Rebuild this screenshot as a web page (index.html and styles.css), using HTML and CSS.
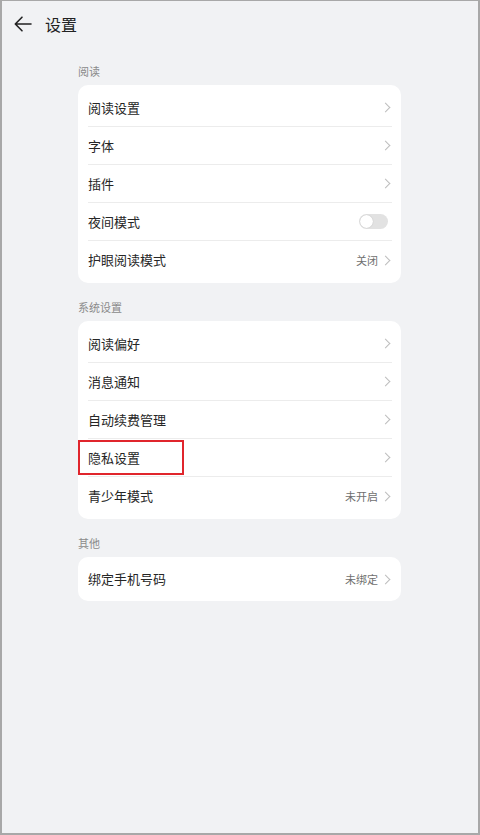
FILE: index.html
```html
<!DOCTYPE html>
<html lang="zh-CN">
<head>
<meta charset="utf-8">
<title>设置</title>
<link rel="stylesheet" href="styles.css">
</head>
<body>
<div class="screen">
  <header class="topbar">
    <svg class="back" width="18" height="16" viewBox="0 0 18 16" aria-hidden="true">
      <path d="M17 8H1.5M8 1.2L1.3 8l6.7 6.8" fill="none" stroke="#222" stroke-width="1.6" stroke-linecap="round" stroke-linejoin="round"/>
    </svg>
    <h1 class="title">设置</h1>
  </header>

  <main class="content">
    <div class="section-label first">阅读</div>
    <section class="card">
      <div class="row"><span class="label">阅读设置</span><span class="right"><i class="chev"></i></span></div>
      <div class="row"><span class="label">字体</span><span class="right"><i class="chev"></i></span></div>
      <div class="row"><span class="label">插件</span><span class="right"><i class="chev"></i></span></div>
      <div class="row"><span class="label">夜间模式</span><span class="right"><span class="toggle"><span class="knob"></span></span></span></div>
      <div class="row"><span class="label">护眼阅读模式</span><span class="right"><span class="value">关闭</span><i class="chev"></i></span></div>
    </section>

    <div class="section-label">系统设置</div>
    <section class="card">
      <div class="row"><span class="label">阅读偏好</span><span class="right"><i class="chev"></i></span></div>
      <div class="row"><span class="label">消息通知</span><span class="right"><i class="chev"></i></span></div>
      <div class="row"><span class="label">自动续费管理</span><span class="right"><i class="chev"></i></span></div>
      <div class="row highlighted"><span class="label">隐私设置</span><span class="right"><i class="chev"></i></span><span class="mark"></span></div>
      <div class="row"><span class="label">青少年模式</span><span class="right"><span class="value">未开启</span><i class="chev"></i></span></div>
    </section>

    <div class="section-label">其他</div>
    <section class="card single">
      <div class="row"><span class="label">绑定手机号码</span><span class="right"><span class="value">未绑定</span><i class="chev"></i></span></div>
    </section>
  </main>
</div>
</body>
</html>
```

FILE: styles.css
```css
* { box-sizing: border-box; margin: 0; padding: 0; }

html, body {
  width: 480px;
  height: 835px;
  background: #f1f2f4;
  font-family: "Noto Sans CJK SC", "Noto Sans", sans-serif;
  color: #222;
}

.screen {
  width: 480px;
  height: 835px;
  border-style: solid;
  border-color: #a8a8a8;
  border-width: 1px 2px 2px 2px;
  background: #f1f2f4;
  overflow: hidden;
}

.topbar {
  height: 45px;
  display: flex;
  align-items: center;
  padding-left: 12px;
}

.back {
  display: block;
  margin-top: 1px;
}

.title {
  font-size: 16px;
  font-weight: 400;
  line-height: 22px;
  margin-left: 13px;
  color: #222;
}

.content {
  margin-left: 76px;
  width: 323px;
}

.section-label {
  font-size: 11px;
  line-height: 16px;
  height: 16px;
  color: #8a8a8a;
  margin-top: 16px;
  margin-bottom: 6px;
}

.section-label.first {
  margin-top: 17px;
}

.card {
  background: #fff;
  border-radius: 10px;
  padding: 4px 0;
}

.card.single {
  padding: 3px 0;
}

.row {
  position: relative;
  height: 38px;
  margin: 0 9px 0 10px;
  display: flex;
  align-items: center;
  justify-content: space-between;
  border-bottom: 1px solid #ececec;
}

.row:last-child {
  border-bottom: none;
}

.label {
  font-size: 13px;
  color: #262626;
  line-height: 18px;
}

.right {
  display: flex;
  align-items: center;
}

.value {
  font-size: 11px;
  color: #6f6f6f;
  margin-right: 4px;
}

.chev {
  display: block;
  width: 7px;
  height: 7px;
  border-top: 1px solid #bdbdbd;
  border-right: 1px solid #bdbdbd;
  transform: rotate(45deg);
  margin-right: 3px;
}

.toggle {
  display: block;
  position: relative;
  width: 29px;
  height: 15px;
  border-radius: 8px;
  background: #e2e2e2;
  margin-right: 4px;
}

.knob {
  position: absolute;
  left: 1px;
  top: 1px;
  width: 13px;
  height: 13px;
  border-radius: 50%;
  background: #fff;
  box-shadow: 0 0 1px rgba(0,0,0,0.25);
}

.mark {
  position: absolute;
  left: -10px;
  top: 1px;
  width: 106px;
  height: 35px;
  border: 2px solid #e0252c;
  pointer-events: none;
}
```
